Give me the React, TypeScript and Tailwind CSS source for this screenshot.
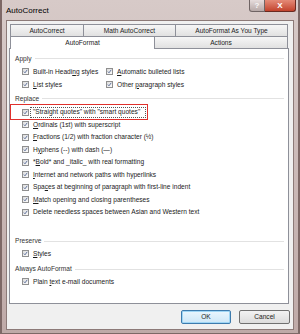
// App.tsx

const font = { fontFamily: '"Liberation Sans", Arial, sans-serif' }

function Check() {
  return (
    <span className="inline-flex w-[7px] h-[7px] shrink-0 items-center justify-center border border-[#8f8f8f] bg-gradient-to-br from-[#dcdcdc] to-[#fbfbfb]">
      <svg width="7" height="7" viewBox="0 0 7 7">
        <path d="M1.2 3.6 L2.8 5.3 L5.9 1.2" fill="none" stroke="#4a5d8f" strokeWidth="1.2" />
      </svg>
    </span>
  )
}

function Label({ text, u }: { text: string; u?: number }) {
  if (u === undefined) return <span>{text}</span>
  return (
    <span>
      {text.slice(0, u)}
      <span className="underline">{text[u]}</span>
      {text.slice(u + 1)}
    </span>
  )
}

function Row({ text, u, h = "h-[12.5px]" }: { text: string; u?: number; h?: string }) {
  return (
    <div className={`flex items-center gap-[4px] pl-[12px] whitespace-nowrap ${h}`}>
      <Check />
      <Label text={text} u={u} />
    </div>
  )
}

function Header({ title, h = "h-[13px]" }: { title: string; h?: string }) {
  return (
    <div className={`flex items-center gap-[3px] pl-[5px] pr-[4px] text-[#333] whitespace-nowrap ${h}`}>
      <span>{title}</span>
      <div className="flex-1 border-t border-[#e2e2e2]" />
    </div>
  )
}

const replaceRows: [string, number | undefined][] = [
  ["Ordinals (1st) with superscript", 0],
  ["Fractions (1/2) with fraction character (½)", 0],
  ["Hyphens (--) with dash (—)", 1],
  ["*Bold* and _italic_ with real formatting", 1],
  ["Internet and network paths with hyperlinks", 0],
  ["Spaces at beginning of paragraph with first-line indent", 3],
  ["Match opening and closing parentheses", 0],
  ["Delete needless spaces between Asian and Western text", undefined],
]

export default function App() {
  return (
    <div
      className="w-[300px] h-[334px] flex flex-col bg-gradient-to-b from-[#d7cac8] to-[#bfaaa8] border-l-2 border-r-2 border-b border-[#7d6866] text-[6.6px] text-[#1b1b1b]"
      style={font}
    >
      {/* title bar */}
      <div className="h-[20px] flex justify-between">
        <span className="pl-[4px] pt-[5px] text-[8px] text-black">AutoCorrect</span>
        <div className="flex self-start mr-[2px]">
          <div className="w-[16px] h-[12px] flex items-center justify-center rounded-bl-[3px] border border-t-0 border-[#6f6464] bg-gradient-to-b from-[#e6dcdc] to-[#b7a9a8] text-[8px] font-bold text-[#f6f6f6]">
            ?
          </div>
          <div className="w-[31px] h-[12px] flex items-center justify-center rounded-br-[3px] border border-l-0 border-t-0 border-[#6a2a20] bg-gradient-to-b from-[#e48a77] to-[#c2422c] text-[8px] font-bold text-white">
            X
          </div>
        </div>
      </div>

      {/* client area */}
      <div className="mx-[4px] h-[310px] bg-[#f0f0f0] border border-[#8c7a78] flex flex-col">
        <div className="pl-[2px] pt-[3px] w-[282px]">
          {/* tab rows */}
          <div className="px-[1px]">
            <div className="flex h-[12px] text-[#222]">
              <div className="w-[74px] flex items-center justify-center border border-b-0 border-[#8e9099] bg-gradient-to-b from-[#f6f6f6] to-[#e1e1e1]">AutoCorrect</div>
              <div className="w-[92px] flex items-center justify-center border border-l-0 border-b-0 border-[#8e9099] bg-gradient-to-b from-[#f6f6f6] to-[#e1e1e1]">Math AutoCorrect</div>
              <div className="w-[112px] flex items-center justify-center border border-l-0 border-b-0 border-[#8e9099] bg-gradient-to-b from-[#f6f6f6] to-[#e1e1e1]">AutoFormat As You Type</div>
            </div>
            <div className="flex h-[12px] text-[#222]">
              <div className="w-[145px] flex items-center justify-center border border-b-0 border-[#8e9099] bg-white relative z-10 h-[13px]">AutoFormat</div>
              <div className="w-[133px] flex items-center justify-center border border-l-0 border-b-0 border-[#8e9099] bg-gradient-to-b from-[#f6f6f6] to-[#e1e1e1]">Actions</div>
            </div>
          </div>

          {/* panel */}
          <div className="h-[256px] bg-white border border-[#8e9099] pt-[3px] flex flex-col">
            <Header title="Apply" />
            <div className="grid grid-cols-[96px_1fr]">
              <Row text="Built-in Heading styles" u={14} h="h-[13px]" />
              <div className="flex items-center gap-[4px] h-[13px] whitespace-nowrap">
                <Check />
                <Label text="Automatic bulleted lists" u={0} />
              </div>
              <Row text="List styles" u={0} h="h-[13px]" />
              <div className="flex items-center gap-[4px] h-[13px] whitespace-nowrap">
                <Check />
                <Label text="Other paragraph styles" u={6} />
              </div>
            </div>
            <Header title="Replace" h="h-[15px]" />
            <div className="relative">
              <Row text={'"Straight quotes" with "smart quotes"'} />
              <div className="absolute left-[0px] top-[-2px] w-[138px] h-[16px] border-[1.5px] border-[#e0302c]" />
              <div className="absolute left-[20px] top-[1px] w-[116px] h-[11px] border border-dotted border-[#555]" />
            </div>
            {replaceRows.map(([t, u], i) => (
              <Row key={i} text={t} u={u} />
            ))}
            <div className="h-[16px]" />
            <Header title="Preserve" />
            <Row text="Styles" u={0} />
            <div className="h-[2.5px]" />
            <Header title="Always AutoFormat" />
            <Row text="Plain text e-mail documents" u={6} />
          </div>
        </div>

        {/* buttons */}
        <div className="flex justify-end gap-[8px] pr-[3px] mt-[6px]">
          <div className="w-[50px] h-[14px] flex items-center justify-center rounded-[2px] border border-[#3d7bad] bg-gradient-to-b from-[#eaf6fd] to-[#cde7f7] shadow-[inset_0_0_0_1px_#9fd6f5] text-[#222]">
            OK
          </div>
          <div className="w-[51px] h-[14px] flex items-center justify-center rounded-[2px] border border-[#707070] bg-gradient-to-b from-[#f2f2f2] to-[#dcdcdc] text-[#222]">
            Cancel
          </div>
        </div>
      </div>
    </div>
  )
}
